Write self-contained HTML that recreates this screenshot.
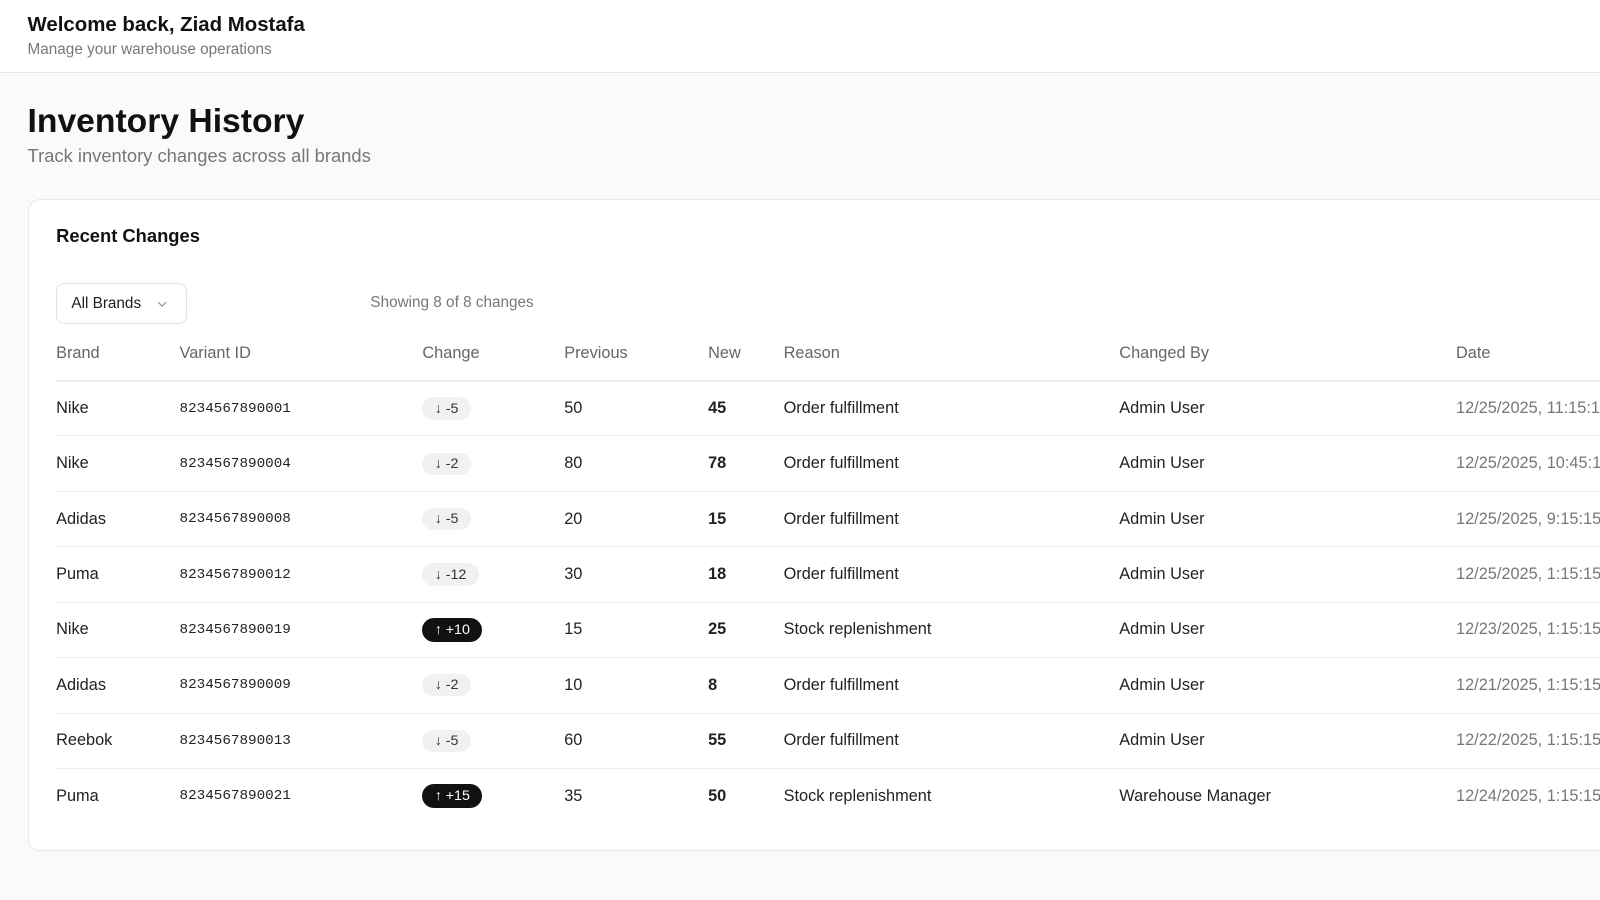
<!DOCTYPE html>
<html><head><style>
*{box-sizing:border-box;margin:0;padding:0}
body{width:1600px;height:900px;overflow:hidden;background:#fafafa;font-family:"Liberation Sans",sans-serif;color:#111}
.w{zoom:1.0204;position:relative;width:1568px;height:882px}
.hdr{height:72px;background:#fff;border-bottom:1px solid #e6e6e6;padding:13px 27px}
.hdr h1{font-size:20px;font-weight:bold;line-height:24px}
.hdr p{font-size:15px;color:#777;margin-top:3px}
.t{position:absolute;left:27px;top:101px}
.t h2{font-size:33px;font-weight:bold;line-height:38px}
.t p{font-size:18px;color:#777;margin-top:3px}
.card{position:absolute;left:27px;top:195px;width:1620px;height:639px;background:#fff;border:1px solid #e8e8e8;border-radius:12px}
.card h3{position:absolute;left:27px;top:25px;font-size:18px;font-weight:bold}
.sel{position:absolute;left:27px;top:81px;width:128px;height:41px;border:1px solid #e3e3e3;border-radius:8px;font-size:15px;padding:11px 14px;color:#222}
.sel svg{position:absolute;left:98px;top:17px}
.show{position:absolute;left:335px;top:92px;font-size:15px;color:#777}
table{position:absolute;left:27px;top:131px;width:1560px;border-collapse:collapse;font-size:16px}
th{text-align:left;font-weight:normal;color:#666;height:46px;padding-bottom:6px;border-bottom:2px solid #ececec;white-space:nowrap}
td{height:54.3px;border-bottom:1px solid #ececec;white-space:nowrap;color:#222}
tr:last-child td{border-bottom:none}
.m{font-family:"Liberation Mono",monospace;font-size:14px}
.b{font-weight:bold}
.d{color:#777}
.bd{display:inline-block;border-radius:12px;font-size:14px;padding:3px 12px;background:#f1f1f1;color:#333}
.bd.up{background:#111;color:#fff;padding:4px 12px}
</style></head><body><div class="w">
<div class="hdr"><h1>Welcome back, Ziad Mostafa</h1><p>Manage your warehouse operations</p></div>
<div class="t"><h2>Inventory History</h2><p>Track inventory changes across all brands</p></div>
<div class="card">
<h3>Recent Changes</h3>
<div class="sel">All Brands<svg width="10" height="6" viewBox="0 0 10 6"><path d="M1 1l4 4 4-4" fill="none" stroke="#999" stroke-width="1.2"/></svg></div>
<div class="show">Showing 8 of 8 changes</div>
<table>
<colgroup><col style="width:121px"><col style="width:238px"><col style="width:139px"><col style="width:141px"><col style="width:74px"><col style="width:329px"><col style="width:330px"><col></colgroup>
<tr><th>Brand</th><th>Variant ID</th><th>Change</th><th>Previous</th><th>New</th><th>Reason</th><th>Changed By</th><th>Date</th></tr>
<tr><td>Nike</td><td class="m">8234567890001</td><td><span class="bd">↓ -5</span></td><td>50</td><td class="b">45</td><td>Order fulfillment</td><td>Admin User</td><td class="d">12/25/2025, 11:15:15 AM</td></tr>
<tr><td>Nike</td><td class="m">8234567890004</td><td><span class="bd">↓ -2</span></td><td>80</td><td class="b">78</td><td>Order fulfillment</td><td>Admin User</td><td class="d">12/25/2025, 10:45:15 AM</td></tr>
<tr><td>Adidas</td><td class="m">8234567890008</td><td><span class="bd">↓ -5</span></td><td>20</td><td class="b">15</td><td>Order fulfillment</td><td>Admin User</td><td class="d">12/25/2025, 9:15:15 AM</td></tr>
<tr><td>Puma</td><td class="m">8234567890012</td><td><span class="bd">↓ -12</span></td><td>30</td><td class="b">18</td><td>Order fulfillment</td><td>Admin User</td><td class="d">12/25/2025, 1:15:15 AM</td></tr>
<tr><td>Nike</td><td class="m">8234567890019</td><td><span class="bd up">↑ +10</span></td><td>15</td><td class="b">25</td><td>Stock replenishment</td><td>Admin User</td><td class="d">12/23/2025, 1:15:15 AM</td></tr>
<tr><td>Adidas</td><td class="m">8234567890009</td><td><span class="bd">↓ -2</span></td><td>10</td><td class="b">8</td><td>Order fulfillment</td><td>Admin User</td><td class="d">12/21/2025, 1:15:15 AM</td></tr>
<tr><td>Reebok</td><td class="m">8234567890013</td><td><span class="bd">↓ -5</span></td><td>60</td><td class="b">55</td><td>Order fulfillment</td><td>Admin User</td><td class="d">12/22/2025, 1:15:15 AM</td></tr>
<tr><td>Puma</td><td class="m">8234567890021</td><td><span class="bd up">↑ +15</span></td><td>35</td><td class="b">50</td><td>Stock replenishment</td><td>Warehouse Manager</td><td class="d">12/24/2025, 1:15:15 AM</td></tr>
</table>
</div>
</div></body></html>
